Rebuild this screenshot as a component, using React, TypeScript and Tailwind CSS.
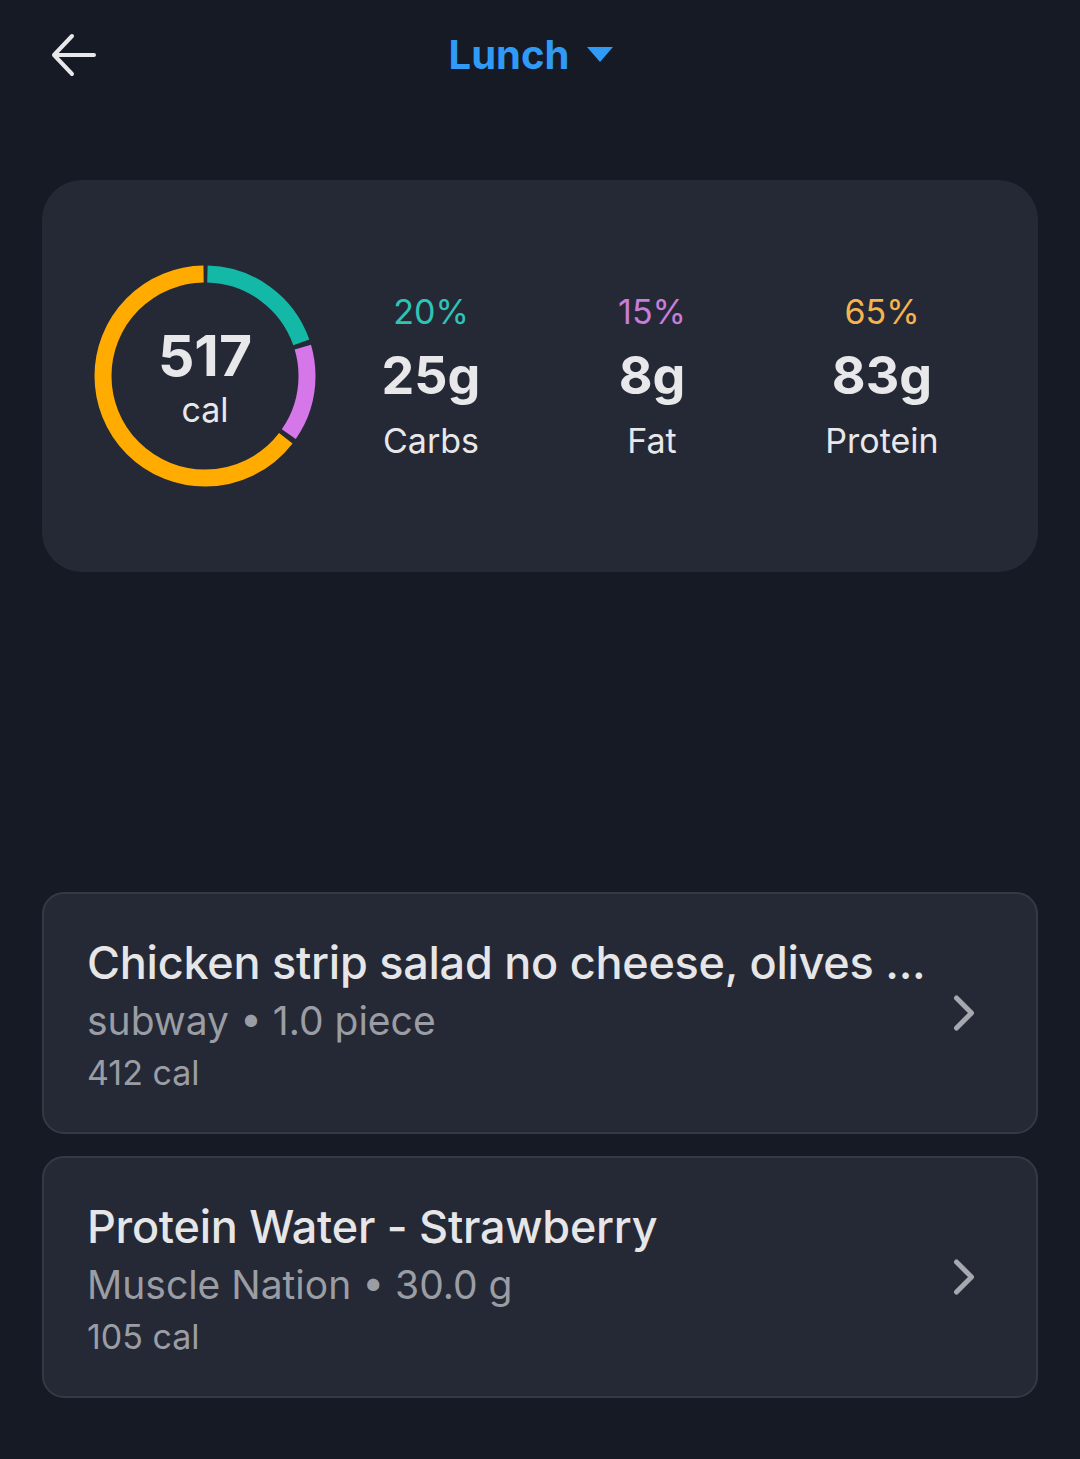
import { ChevronRight } from "lucide-react";

type Macro = { pct: string; grams: string; label: string; color: string };

const macros: Macro[] = [
  { pct: "20%", grams: "25g", label: "Carbs", color: "text-[#2ec4b6]" },
  { pct: "15%", grams: "8g", label: "Fat", color: "text-[#c77ddb]" },
  { pct: "65%", grams: "83g", label: "Protein", color: "text-[#f6b34f]" },
];

const foods = [
  { name: "Chicken strip salad no cheese, olives ...", sub: "subway • 1.0 piece", cal: "412 cal" },
  { name: "Protein Water - Strawberry", sub: "Muscle Nation • 30.0 g", cal: "105 cal" },
];

// ring segments: [start %, end %, colour]
const segments: [number, number, string][] = [
  [0, 0.2, "#14b8a6"],
  [0.2, 0.35, "#d577e8"],
  [0.35, 1, "#ffab00"],
];

const Ring = () => {
  const r = 102;
  const c = 2 * Math.PI * r;
  const gap = 5;
  return (
    <div className="relative w-[224px] h-[224px] shrink-0">
      <svg width="224" height="224" viewBox="0 0 224 224" className="-rotate-90">
        {segments.map(([s, e, col], i) => {
          const len = (e - s) * c - gap;
          return (
            <circle
              key={i}
              cx="112"
              cy="112"
              r={r}
              fill="none"
              stroke={col}
              strokeWidth="17"
              strokeDasharray={`${len} ${c - len}`}
              strokeDashoffset={-(s * c + gap / 2)}
            />
          );
        })}
      </svg>
      <div className="absolute inset-0 flex flex-col items-center justify-center">
        <span className="text-[57px] font-bold leading-none text-[#e8e8ea] mt-[2px]">517</span>
        <span className="text-[34px] leading-none text-[#e8e8ea] mt-[9px]">cal</span>
      </div>
    </div>
  );
};

export default function App() {
  return (
    <div className="min-h-[1459px] bg-[#161a25] font-['Inter',sans-serif]">
      {/* header */}
      <div className="relative h-[110px] flex items-center justify-center">
        <button className="absolute left-[50px] top-[31px] text-[#e8e8ea]">
          <svg width="48" height="48" viewBox="0 0 48 48" fill="none" stroke="currentColor" strokeWidth="4" strokeLinecap="round" strokeLinejoin="round">
            <path d="M44 24H5M22 5L4 24l18 19" />
          </svg>
        </button>
        <div className="flex items-center gap-[18px] text-[#2f9bf7] ml-[-18px]">
          <span className="text-[40px] font-bold">Lunch</span>
          <svg width="26" height="16" viewBox="0 0 26 16">
            <path d="M0 0h26L13 15z" fill="currentColor" />
          </svg>
        </div>
      </div>

      {/* summary */}
      <div className="mx-[42px] mt-[70px] h-[392px] rounded-[40px] bg-[#252935] flex items-center pl-[51px]">
        <Ring />
        <div className="grid grid-cols-[220px_222px_238px] pl-[4px]">
          {macros.map((m) => (
            <div key={m.label} className="flex flex-col items-center">
              <span className={`text-[34px] leading-none ${m.color}`}>{m.pct}</span>
              <span className="text-[52px] font-bold leading-none text-[#e8e8ea] mt-[21px]">{m.grams}</span>
              <span className="text-[34px] leading-none text-[#e8e8ea] mt-[22px]">{m.label}</span>
            </div>
          ))}
        </div>
      </div>

      {/* foods */}
      <div className="mx-[42px] mt-[320px] flex flex-col gap-[22px]">
        {foods.map((f) => (
          <div
            key={f.name}
            className="h-[242px] rounded-[22px] bg-[#252935] border-2 border-[#343946] flex items-center pl-[43px] pr-[42px]"
          >
            <div className="flex-1 min-w-0 flex flex-col pt-[4px]">
              <span className="text-[45px] font-medium leading-none tracking-[-0.25px] whitespace-nowrap text-[#e6e6e8]">{f.name}</span>
              <span className="text-[39px] leading-none text-[#9b9da5] mt-[16px]">{f.sub}</span>
              <span className="text-[34px] leading-none text-[#9b9da5] mt-[16px]">{f.cal}</span>
            </div>
            <ChevronRight size={60} strokeWidth={2} className="shrink-0 text-[#a6a8b0]" />
          </div>
        ))}
      </div>
    </div>
  );
}
